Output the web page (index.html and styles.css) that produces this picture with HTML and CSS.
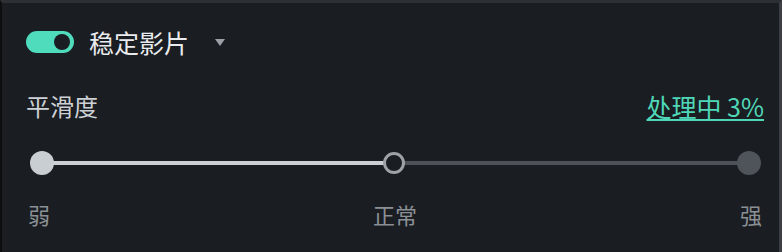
FILE: index.html
```html
<!DOCTYPE html>
<html lang="zh">
<head>
<meta charset="utf-8">
<link rel="stylesheet" href="styles.css">
</head>
<body>
<div class="panel">
  <div class="header">
    <div class="toggle"><span class="knob"></span></div>
    <span class="title">稳定影片</span>
    <span class="caret"></span>
  </div>
  <div class="row">
    <span class="label">平滑度</span>
    <a class="status">处理中 3%</a>
  </div>
  <div class="slider">
    <div class="track-on"></div>
    <div class="track-off"></div>
    <span class="dot dot-left"></span>
    <span class="dot dot-mid"></span>
    <span class="dot dot-right"></span>
  </div>
  <div class="ticks">
    <span>弱</span>
    <span>正常</span>
    <span>强</span>
  </div>
</div>
</body>
</html>
```
FILE: styles.css
```css
html, body {
  margin: 0;
  padding: 0;
  background: #1a1d21;
  width: 782px;
  height: 252px;
  overflow: hidden;
  font-family: "Noto Sans CJK SC", "Noto Sans", sans-serif;
}
.panel {
  box-sizing: border-box;
  width: 782px;
  height: 252px;
  border-left: 2px solid #0d0e10;
  border-right: 3px solid #3b3f44;
  border-top: 3px solid #2c3035;
  padding: 0 15px 0 24px;
  display: flex;
  flex-direction: column;
}
.header {
  display: flex;
  align-items: center;
  height: 22px;
  margin-top: 28px;
}
.toggle {
  width: 48px;
  height: 22px;
  border-radius: 11px;
  background: #4fdcbc;
  position: relative;
  flex: none;
}
.knob {
  position: absolute;
  right: 4px;
  top: 3px;
  width: 16px;
  height: 16px;
  border-radius: 50%;
  background: #1a1d21;
}
.title {
  margin-left: 15px;
  font-size: 25px;
  line-height: 24px;
  color: #e9ebee;
}
.caret {
  margin-left: 26px;
  width: 0;
  height: 0;
  border-left: 5.5px solid transparent;
  border-right: 5.5px solid transparent;
  border-top: 7px solid #9ba0a6;
  margin-top: 1px;
}
.row {
  display: flex;
  justify-content: space-between;
  align-items: center;
  margin-top: 40px;
  height: 26px;
}
.label {
  font-size: 24px;
  line-height: 26px;
  color: #cdd1d5;
}
.status {
  font-size: 25px;
  line-height: 26px;
  color: #4fd8b8;
  text-decoration: underline;
  text-underline-offset: 2px;
  text-decoration-thickness: 2px;
}
.slider {
  position: relative;
  height: 24px;
  margin-top: 32px;
  margin-left: 4px;
  margin-right: 3px;
}
.track-on {
  position: absolute;
  left: 12px;
  width: 352px;
  top: 10px;
  height: 4px;
  background: #cbd0d5;
}
.track-off {
  position: absolute;
  left: 364px;
  right: 12px;
  top: 10px;
  height: 4px;
  background: #4d5258;
}
.dot {
  position: absolute;
  top: 0;
  width: 24px;
  height: 24px;
  border-radius: 50%;
  box-sizing: border-box;
}
.dot-left {
  left: 0;
  background: #c9ced3;
}
.dot-mid {
  left: 353px;
  top: 1px;
  width: 22px;
  height: 22px;
  background: #1a1d21;
  border: 3px solid #9da2a7;
}
.dot-right {
  right: 0;
  background: #4f545a;
}
.ticks {
  display: flex;
  justify-content: space-between;
  margin-top: 27px;
  font-size: 22px;
  line-height: 24px;
  color: #8b9095;
  padding-left: 2px;
  padding-right: 2px;
}
```
